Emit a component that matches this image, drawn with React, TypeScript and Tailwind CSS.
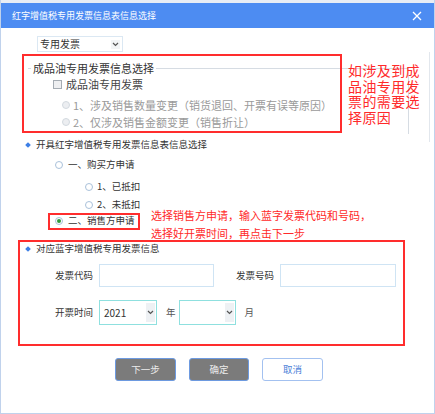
import React from 'react';

function Radio({ checked = false, disabled = false }: { checked?: boolean; disabled?: boolean }) {
    return (
        <span
            className={`flex items-center justify-center w-[8px] h-[8px] rounded-full border ${
                disabled ? 'border-[#d3d9df] bg-[#eceef1]' : 'border-[#a9c1da] bg-white'
            }`}
        >
            {checked && <span className="w-[4px] h-[4px] rounded-full bg-[#2f9a3a]" />}
        </span>
    );
}

function Diamond() {
    return <span className="w-[4px] h-[4px] rotate-45 bg-[#3d7fe6]" />;
}

function Chevron() {
    return (
        <svg width="7" height="5" viewBox="0 0 7 5">
            <path d="M1 1 L3.5 3.5 L6 1" stroke="#555" strokeWidth="1.2" fill="none" />
        </svg>
    );
}

export default function App() {
    return (
        <div className="relative w-[435px] h-[414px] bg-white border-x border-b border-[#c0d2ec] font-['Noto_Sans_CJK_SC','Microsoft_YaHei',sans-serif] text-[#333] overflow-hidden">
            <div className="h-[3px] bg-[#e8edf5]" />
            {/* title bar */}
            <div className="h-[25px] bg-[#4d8cf2] flex items-center justify-between pl-[11px] pr-[12px]">
                <span className="text-[9px] text-white">红字增值税专用发票信息表信息选择</span>
                <svg width="10" height="10" viewBox="0 0 10 10">
                    <path d="M1 1 L9 9 M9 1 L1 9" stroke="#fff" strokeWidth="1.3" />
                </svg>
            </div>

            {/* invoice type select */}
            <div className="mt-[8px] ml-[36px] w-[86px] h-[16px] border border-[#dbe8f3] flex items-center justify-between pl-[2px] pr-[2px]">
                <span className="text-[10px] leading-none">专用发票</span>
                <span className="w-[9px] h-[9px] bg-[#f2f4f6] flex items-center justify-center">
                    <Chevron />
                </span>
            </div>

            {/* 成品油 fieldset */}
            <div className="mt-[16px] ml-[27px] w-[381px] h-[66px] border-t border-r border-[#d6dce3]">
                <div className="-mt-[7px] h-[12px] flex items-center">
                    <span className="ml-[3px] bg-white px-[2px] text-[11px] leading-[12px] text-[#333]">成品油专用发票信息选择</span>
                </div>
                <div className="mt-[3px] h-[14px] flex items-center gap-[4px] pl-[25px]">
                    <span className="w-[9px] h-[9px] border border-[#a5acb3] bg-[#eeeff1]" />
                    <span className="text-[11px] leading-none text-[#444]">成品油专用发票</span>
                </div>
                <div className="mt-[7px] h-[14px] flex items-center gap-[3px] pl-[34px]">
                    <Radio disabled />
                    <span className="text-[11px] leading-none text-[#9a9a9a]">1、涉及销售数量变更（销货退回、开票有误等原因）</span>
                </div>
                <div className="mt-[3px] h-[14px] flex items-center gap-[3px] pl-[34px]">
                    <Radio disabled />
                    <span className="text-[11px] leading-none text-[#9a9a9a]">2、仅涉及销售金额变更（销售折让）</span>
                </div>
            </div>

            {/* 开具红字 section */}
            <div className="mt-[5px] h-[12px] flex items-center gap-[6px] pl-[25px]">
                <Diamond />
                <span className="text-[9.5px] leading-none">开具红字增值税专用发票信息表信息选择</span>
            </div>
            <div className="mt-[8px] h-[12px] flex items-center gap-[5px] pl-[54px]">
                <Radio />
                <span className="text-[9.5px] leading-none">一、购买方申请</span>
            </div>
            <div className="mt-[10px] h-[12px] flex items-center gap-[4px] pl-[84px]">
                <Radio />
                <span className="text-[9.5px] leading-none">1、已抵扣</span>
            </div>
            <div className="mt-[6px] h-[12px] flex items-center gap-[4px] pl-[84px]">
                <Radio />
                <span className="text-[9.5px] leading-none">2、未抵扣</span>
            </div>
            <div className="mt-[4px] h-[12px] flex items-center gap-[5px] pl-[54px]">
                <Radio checked />
                <span className="text-[9.5px] leading-none">二、销售方申请</span>
            </div>

            {/* 对应蓝字 section */}
            <div className="mt-[16px] h-[12px] flex items-center gap-[6px] pl-[25px]">
                <Diamond />
                <span className="text-[9.5px] leading-none">对应蓝字增值税专用发票信息</span>
            </div>
            <div className="mt-[9px] h-[23px] flex items-center pl-[54px]">
                <span className="w-[44px] text-[9.5px] leading-none">发票代码</span>
                <span className="w-[115px] h-[23px] border border-[#cfe4f4]" />
                <span className="ml-[22px] w-[44px] text-[9.5px] leading-none">发票号码</span>
                <span className="w-[116px] h-[23px] border border-[#cfe4f4]" />
            </div>
            <div className="mt-[13px] h-[25px] flex items-center pl-[54px]">
                <span className="w-[44px] text-[9.5px] leading-none">开票时间</span>
                <div className="w-[58px] h-[25px] border border-[#8fe0df] flex items-center justify-between pl-[4px] pr-[1px]">
                    <span className="text-[10px] leading-none">2021</span>
                    <span className="w-[9px] h-[19px] bg-[#eef1f4] flex items-center justify-center">
                        <Chevron />
                    </span>
                </div>
                <span className="ml-[9px] text-[9.5px] leading-none text-[#555]">年</span>
                <div className="ml-[3px] w-[57px] h-[25px] border border-[#8fe0df] flex items-center justify-end pr-[1px]">
                    <span className="w-[9px] h-[19px] bg-[#eef1f4] flex items-center justify-center">
                        <Chevron />
                    </span>
                </div>
                <span className="ml-[9px] text-[9.5px] leading-none text-[#555]">月</span>
            </div>

            {/* buttons */}
            <div className="mt-[33px] flex gap-[13px] pl-[114px]">
                <button className="w-[61px] h-[23px] rounded-[3px] bg-[#7b7b7b] border border-[#6d9ae0] text-[9.5px] text-[#ececec]">下一步</button>
                <button className="w-[60px] h-[23px] rounded-[3px] bg-[#7b7b7b] border border-[#6d9ae0] text-[9.5px] text-[#ececec]">确定</button>
                <button className="w-[61px] h-[23px] rounded-[3px] bg-white border border-[#a3c1f0] text-[9.5px] text-[#4a7fd8]">取消</button>
            </div>

            {/* faint panel line */}
            <div className="absolute left-[428px] top-[52px] w-px h-[90px] bg-[#e2e7ed]" />

            {/* red annotations */}
            <div className="absolute left-[21px] top-[54px] w-[320px] h-[79px] border-2 border-[#ff2d2d]" />
            <div className="absolute left-[347px] top-[63px] w-[76px] text-[14px] leading-[15.5px] tracking-[0.4px] text-[#ff2a2a]">
                如涉及到成品油专用发票的需要选择原因
            </div>
            <div className="absolute left-[47px] top-[213px] w-[92px] h-[17px] border-2 border-[#ff2d2d]" />
            <div className="absolute left-[150px] top-[206px] text-[11px] leading-[18px] text-[#ff2a2a]">
                <div>选择销售方申请，输入蓝字发票代码和号码，</div>
                <div>选择好开票时间，再点击下一步</div>
            </div>
            <div className="absolute left-[17px] top-[240px] w-[387px] h-[106px] border-2 border-[#ff2d2d]" />
        </div>
    );
}
